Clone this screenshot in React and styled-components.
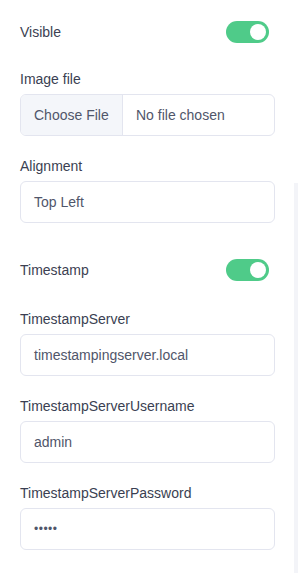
import styled, { createGlobalStyle } from "styled-components"

const GlobalStyle = createGlobalStyle`
  html, body {
    margin: 0;
    padding: 0;
    background: #fff;
  }
  body {
    font-family: "Liberation Sans", Arial, sans-serif;
    font-size: 14px;
    color: #3c4152;
  }
`

const Panel = styled.div`
  position: relative;
  padding: 21px 23px 23px 20px;
  min-height: 573px;
  box-sizing: border-box;
`

const Track = styled.div`
  position: absolute;
  right: 0;
  top: 183px;
  bottom: 0;
  width: 4px;
  background: #f3f4f8;
`

const ToggleRow = styled.div`
  display: flex;
  align-items: center;
  justify-content: space-between;
  height: 22px;
  padding-right: 6px;
  margin-top: ${p => p.$top || 0}px;
  margin-bottom: ${p => p.$bottom || 0}px;
`

const Label = styled.label`
  display: block;
  line-height: 17px;
  margin-bottom: 6px;
  color: #3a3f52;
`

const Switch = styled.span`
  display: flex;
  align-items: center;
  justify-content: flex-end;
  box-sizing: border-box;
  width: 43px;
  height: 22px;
  padding: 0 3px;
  border-radius: 11px;
  background: ${p => (p.$on ? "#4fcb89" : "#d5d9e2")};
  &::after {
    content: "";
    width: 16px;
    height: 16px;
    border-radius: 50%;
    background: #fff;
  }
`

const Field = styled.div`
  margin-bottom: 22px;
`

const Box = styled.div`
  display: flex;
  align-items: center;
  box-sizing: border-box;
  height: 42px;
  border: 1px solid #e3e5ef;
  border-radius: 6px;
  overflow: hidden;
  color: #50566a;
`

const Value = styled.span`
  padding-left: 13px;
  font-size: ${p => (p.$secret ? "12px" : "14px")};
  letter-spacing: ${p => (p.$secret ? "0.5px" : "0")};
`

const FileButton = styled.span`
  display: flex;
  align-items: center;
  align-self: stretch;
  padding: 0 13px;
  width: 102px;
  box-sizing: border-box;
  background: #f4f6fa;
  border-right: 1px solid #e3e5ef;
  color: #50566a;
`

const FileName = styled.span`
  padding-left: 13px;
`

function TextField({ label, value, secret }) {
  return (
    <Field>
      <Label>{label}</Label>
      <Box>
        <Value $secret={secret}>{value}</Value>
      </Box>
    </Field>
  )
}

export default function App() {
  return (
    <Panel>
      <GlobalStyle />
      <ToggleRow $bottom={28}>
        <span>Visible</span>
        <Switch $on />
      </ToggleRow>
      <Field>
        <Label>Image file</Label>
        <Box>
          <FileButton>Choose File</FileButton>
          <FileName>No file chosen</FileName>
        </Box>
      </Field>
      <TextField label="Alignment" value="Top Left" />
      <ToggleRow $top={36} $bottom={30}>
        <span>Timestamp</span>
        <Switch $on />
      </ToggleRow>
      <TextField label="TimestampServer" value="timestampingserver.local" />
      <TextField label="TimestampServerUsername" value="admin" />
      <TextField label="TimestampServerPassword" value="•••••" secret />
      <Track />
    </Panel>
  )
}
